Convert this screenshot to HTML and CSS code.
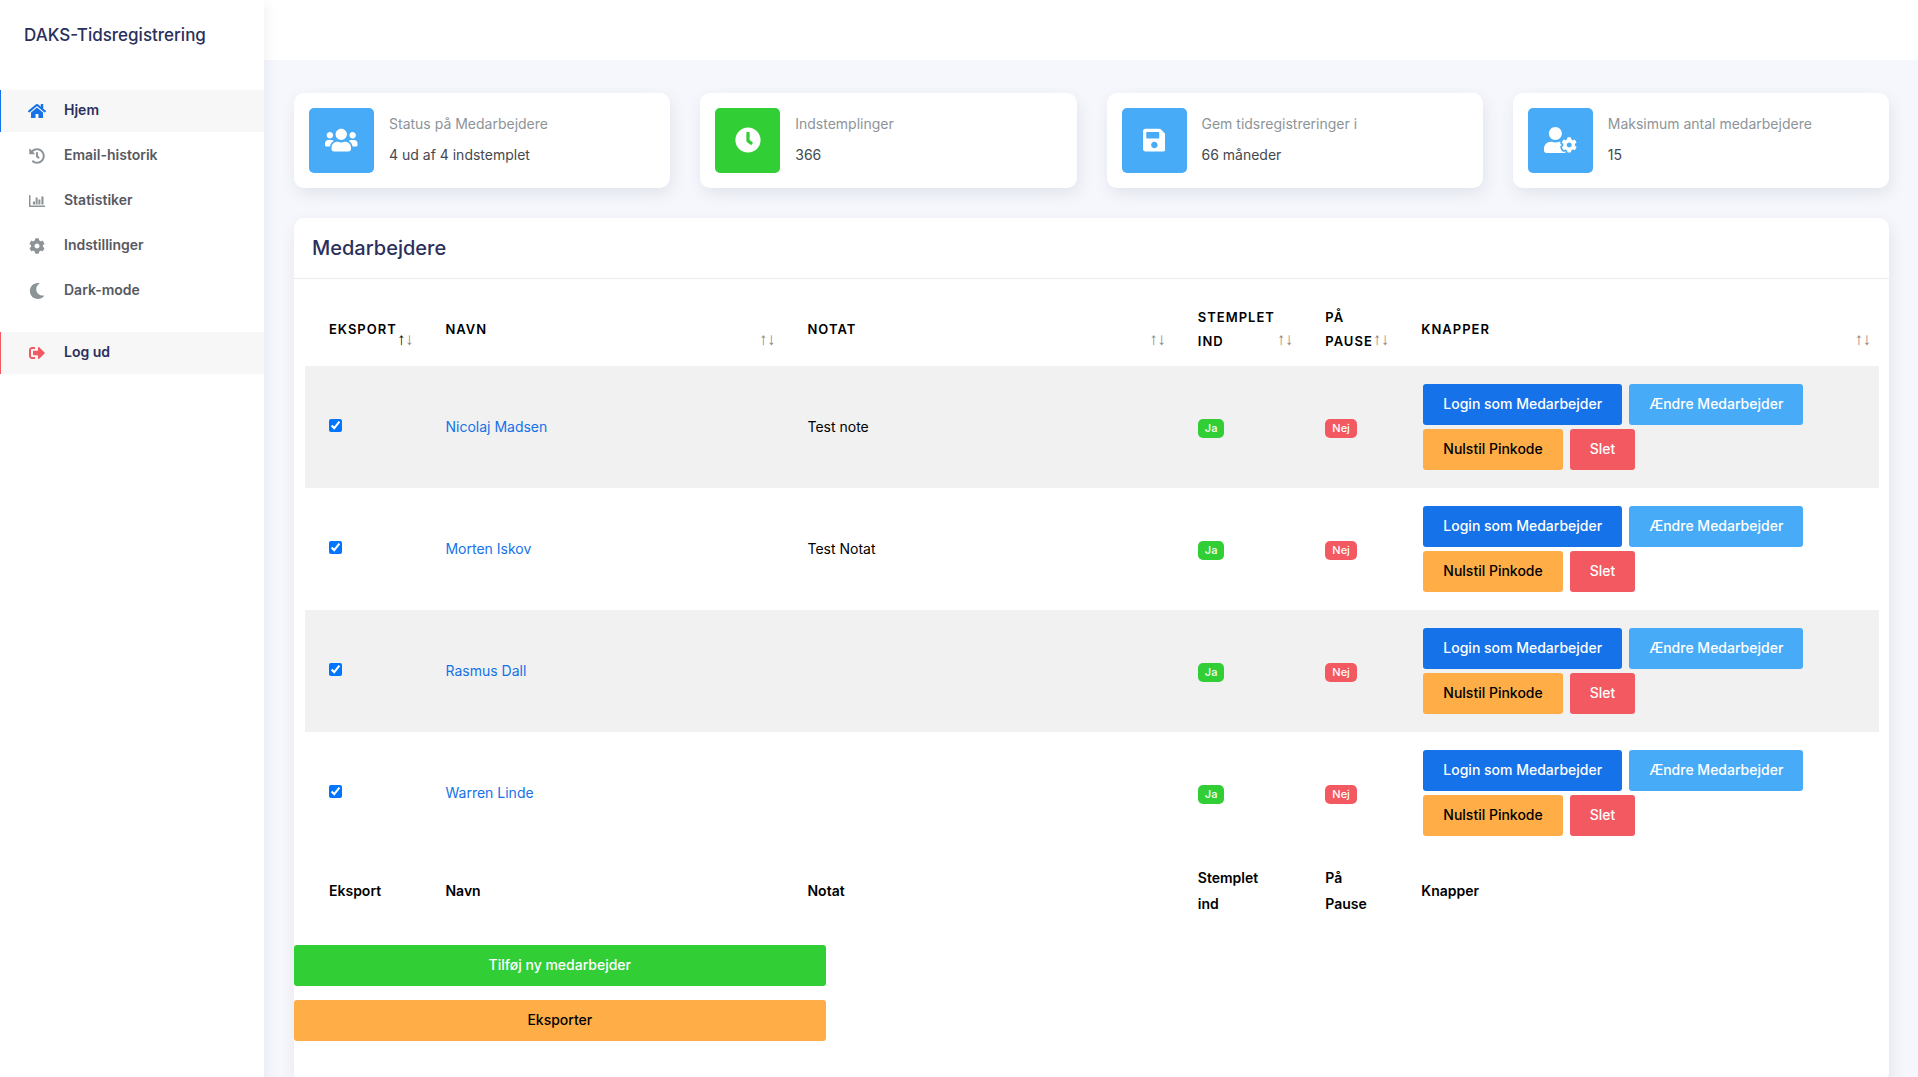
FILE: index.html
```
<!DOCTYPE html>
<html lang="da">
<head>
  <meta charset="UTF-8" />
  <title>DAKS-Tidsregistrering</title>
  <meta name="viewport" content="width=device-width, initial-scale=1.0" />
  <link rel="stylesheet" href="styles.css">
</head>
<body>

  <div class="wrapper">
    <!-- SIDEBAR -->
    <aside class="sidebar">
      <a href="#" class="logo">DAKS-Tidsregistrering</a>
      <nav>
        <ul class="nav">
          <li class="active">
            <a href="#">
              <svg viewBox="0 0 576 512"><path d="M280.37 148.26L96 300.11V464a16 16 0 0 0 16 16l112.06-.29a16 16 0 0 0 15.92-16V368a16 16 0 0 1 16-16h64a16 16 0 0 1 16 16v95.64a16 16 0 0 0 16 16.05L464 480a16 16 0 0 0 16-16V300L295.67 148.26a12.19 12.19 0 0 0-15.3 0zM571.6 251.47L488 182.56V44.05a12 12 0 0 0-12-12h-56a12 12 0 0 0-12 12v72.61L318.47 43a48 48 0 0 0-61 0L4.34 251.47a12 12 0 0 0-1.6 16.9l25.5 31A12 12 0 0 0 45.15 301l235.22-193.74a12.19 12.19 0 0 1 15.3 0L530.9 301a12 12 0 0 0 16.9-1.6l25.5-31a12 12 0 0 0-1.7-16.93z"/></svg>
              <span>Hjem</span>
            </a>
          </li>
          <li>
            <a href="#">
              <svg viewBox="0 0 512 512"><path d="M504 255.531c.253 136.64-111.18 248.372-247.82 248.468-59.015.042-113.223-20.53-155.822-54.911-11.077-8.94-11.905-25.541-1.839-35.607l11.267-11.267c8.609-8.609 22.353-9.551 31.891-1.984C173.062 425.135 212.781 440 256 440c101.705 0 184-82.311 184-184 0-101.705-82.311-184-184-184-48.814 0-93.149 18.969-126.068 49.932l50.754 50.754c10.08 10.08 2.941 27.314-11.313 27.314H24c-8.837 0-16-7.163-16-16V38.627c0-14.254 17.234-21.393 27.314-11.314l49.372 49.372C129.209 34.136 189.552 8 256 8c136.81 0 247.747 110.78 248 247.531zm-180.912 78.784l9.823-12.63c8.138-10.463 6.253-25.542-4.21-33.679L288 256.349V152c0-13.255-10.745-24-24-24h-16c-13.255 0-24 10.745-24 24v135.651l65.409 50.874c10.463 8.137 25.541 6.253 33.679-4.21z"/></svg>
              <span>Email-historik</span>
            </a>
          </li>
          <li>
            <a href="#">
              <svg viewBox="0 0 512 512"><path d="M0 76a12 12 0 0 1 12-12h24a12 12 0 0 1 12 12v324h452a12 12 0 0 1 12 12v24a12 12 0 0 1-12 12H12a12 12 0 0 1-12-12zM124 268h68v100h-68zM212 140h64v228h-64zM300 204h64v164h-64zM396 108h68v260h-68z"/></svg>
              <span>Statistiker</span>
            </a>
          </li>
          <li>
            <a href="#">
              <svg viewBox="0 0 512 512"><path d="M487.4 315.7l-42.6-24.6c4.3-23.2 4.3-47 0-70.2l42.6-24.6c4.9-2.8 7.1-8.6 5.5-14-11.1-35.6-30-67.8-54.7-94.6-3.8-4.1-10-5.1-14.8-2.3L380.8 110c-17.9-15.4-38.5-27.3-60.8-35.1V25.8c0-5.6-3.9-10.5-9.4-11.7-36.7-8.2-74.3-7.8-109.2 0-5.5 1.2-9.4 6.1-9.4 11.7V75c-22.2 7.9-42.8 19.8-60.8 35.1L88.7 85.5c-4.9-2.8-11-1.9-14.8 2.3-24.7 26.7-43.6 58.9-54.7 94.6-1.7 5.4.6 11.2 5.5 14L67.3 221c-4.3 23.2-4.3 47 0 70.2l-42.6 24.6c-4.9 2.8-7.1 8.6-5.5 14 11.1 35.6 30 67.8 54.7 94.6 3.8 4.1 10 5.1 14.8 2.3l42.6-24.6c17.9 15.4 38.5 27.3 60.8 35.1v49.2c0 5.6 3.9 10.5 9.4 11.7 36.7 8.2 74.3 7.8 109.2 0 5.5-1.2 9.4-6.1 9.4-11.7v-49.2c22.2-7.9 42.8-19.8 60.8-35.1l42.6 24.6c4.9 2.8 11 1.9 14.8-2.3 24.7-26.7 43.6-58.9 54.7-94.6 1.5-5.5-.7-11.3-5.6-14.1zM256 336c-44.1 0-80-35.9-80-80s35.9-80 80-80 80 35.9 80 80-35.9 80-80 80z"/></svg>
              <span>Indstillinger</span>
            </a>
          </li>
          <li>
            <a href="#">
              <svg viewBox="0 0 512 512"><path d="M283.211 512c78.962 0 151.079-35.925 198.857-94.792 7.068-8.708-.639-21.43-11.562-19.35-124.203 23.654-238.262-71.576-238.262-196.954 0-72.222 38.662-138.635 101.498-174.394 9.686-5.512 7.25-20.197-3.756-22.23A258.156 258.156 0 0 0 283.211 0c-141.309 0-256 114.511-256 256 0 141.309 114.511 256 256 256z"/></svg>
              <span>Dark-mode</span>
            </a>
          </li>
          <li class="logout">
            <a href="#">
              <svg viewBox="0 0 512 512"><path d="M497 273L329 441c-15 15-41 4.500-41-17v-96H152c-13.300 0-24-10.700-24-24v-96c0-13.300 10.700-24 24-24h136V88c0-21.400 25.900-32 41-17l168 168c9.300 9.400 9.300 24.600 0 34zM192 436v-40c0-6.600-5.400-12-12-12H96c-17.700 0-32-14.300-32-32V160c0-17.700 14.300-32 32-32h84c6.600 0 12-5.400 12-12V76c0-6.600-5.400-12-12-12H96c-53 0-96 43-96 96v192c0 53 43 96 96 96h84c6.600 0 12-5.400 12-12z"/></svg>
              <span>Log ud</span>
            </a>
          </li>
        </ul>
      </nav>
    </aside>

    <div class="main-panel">
      <header class="topbar"></header>

      <main class="content">
        <!-- STATS -->
        <div class="stats">
          <div class="card stat">
            <div class="stat-icon info">
              <svg viewBox="0 0 640 512"><path d="M96 224c35.300 0 64-28.700 64-64s-28.700-64-64-64-64 28.700-64 64 28.700 64 64 64zm448 0c35.300 0 64-28.700 64-64s-28.700-64-64-64-64 28.700-64 64 28.700 64 64 64zm32 32h-64c-17.600 0-33.500 7.100-45.100 18.600 40.300 22.100 68.900 62 75.100 109.400h66c17.700 0 32-14.300 32-32v-32c0-35.300-28.700-64-64-64zm-256 0c61.900 0 112-50.100 112-112S381.900 32 320 32 208 82.100 208 144s50.100 112 112 112zm76.800 32h-8.300c-20.800 10-43.900 16-68.500 16s-47.600-6-68.500-16h-8.300C179.600 288 128 339.600 128 403.200V432c0 26.500 21.500 48 48 48h288c26.500 0 48-21.500 48-48v-28.800c0-63.600-51.600-115.200-115.200-115.200zm-223.700-13.400C161.500 263.100 145.600 256 128 256H64c-35.300 0-64 28.700-64 64v32c0 17.700 14.300 32 32 32h65.900c6.300-47.400 34.900-87.300 75.200-109.400z"/></svg>
            </div>
            <div class="stat-text">
              <p class="category">Status på Medarbejdere</p>
              <p class="value">4 ud af 4 indstemplet</p>
            </div>
          </div>
          <div class="card stat">
            <div class="stat-icon success">
              <svg viewBox="0 0 512 512"><path d="M256,8C119,8,8,119,8,256S119,504,256,504,504,393,504,256,393,8,256,8Zm92.490,313h0l-20,25a16,16,0,0,1-22.490,2.500h0l-67-49.720a40,40,0,0,1-15-31.230V112a16,16,0,0,1,16-16h32a16,16,0,0,1,16,16V256l58,42.500A16,16,0,0,1,348.490,321Z"/></svg>
            </div>
            <div class="stat-text">
              <p class="category">Indstemplinger</p>
              <p class="value">366</p>
            </div>
          </div>
          <div class="card stat">
            <div class="stat-icon info">
              <svg viewBox="0 0 448 512"><path d="M433.941 129.941l-83.882-83.882A48 48 0 0 0 316.118 32H48C21.490 32 0 53.490 0 80v352c0 26.510 21.490 48 48 48h352c26.510 0 48-21.490 48-48V163.882a48 48 0 0 0-14.059-33.941zM224 416c-35.346 0-64-28.654-64-64 0-35.346 28.654-64 64-64s64 28.654 64 64c0 35.346-28.654 64-64 64zm96-304.520V212c0 6.627-5.373 12-12 12H76c-6.627 0-12-5.373-12-12V108c0-6.627 5.373-12 12-12h228.520c3.183 0 6.235 1.264 8.485 3.515l3.480 3.480A11.996 11.996 0 0 1 320 111.480z"/></svg>
            </div>
            <div class="stat-text">
              <p class="category">Gem tidsregistreringer i</p>
              <p class="value">66 måneder</p>
            </div>
          </div>
          <div class="card stat">
            <div class="stat-icon info">
              <svg viewBox="0 0 640 512"><path d="M610.500 373.300c2.600-14.100 2.600-28.500 0-42.600l25.800-14.900c3-1.700 4.300-5.200 3.300-8.500-6.700-21.600-18.200-41.200-33.200-57.400-2.300-2.500-6-3.100-9-1.400l-25.800 14.900c-10.900-9.300-23.400-16.500-36.900-21.300v-29.800c0-3.400-2.400-6.400-5.700-7.100-22.300-5-45-4.800-66.200 0-3.300.7-5.700 3.700-5.700 7.100v29.800c-13.500 4.800-26 12-36.900 21.300l-25.800-14.900c-2.900-1.700-6.700-1.100-9 1.400-15 16.200-26.500 35.800-33.200 57.400-1 3.300.4 6.800 3.300 8.500l25.800 14.900c-2.600 14.100-2.600 28.500 0 42.600l-25.800 14.900c-3 1.700-4.300 5.200-3.300 8.500 6.700 21.600 18.200 41.100 33.200 57.400 2.300 2.500 6 3.100 9 1.400l25.800-14.900c10.900 9.300 23.400 16.500 36.900 21.300v29.800c0 3.400 2.400 6.400 5.700 7.100 22.300 5 45 4.800 66.200 0 3.300-.7 5.700-3.700 5.700-7.100v-29.800c13.500-4.800 26-12 36.900-21.300l25.800 14.900c2.900 1.700 6.700 1.100 9-1.400 15-16.200 26.500-35.800 33.200-57.400 1-3.300-.4-6.800-3.300-8.500l-25.800-14.900zM496 400.500c-26.800 0-48.500-21.800-48.500-48.500s21.800-48.500 48.500-48.500 48.500 21.800 48.500 48.500-21.700 48.500-48.500 48.500zM224 256c70.700 0 128-57.300 128-128S294.700 0 224 0 96 57.300 96 128s57.300 128 128 128zm201.200 226.500c-2.300-1.200-4.600-2.600-6.800-3.900l-7.900 4.600c-6 3.400-12.800 5.300-19.600 5.300-10.900 0-21.400-4.600-28.900-12.600-18.300-19.800-32.300-43.900-40.200-69.600-5.500-17.700 1.900-36.400 17.900-45.700l7.900-4.600c-.1-2.600-.1-5.200 0-7.800l-7.900-4.600c-16-9.200-23.400-28-17.900-45.700.9-2.900 2.200-5.800 3.200-8.700-3.800-.3-7.500-1.200-11.400-1.200h-16.700c-22.200 10.200-46.900 16-72.900 16s-50.600-5.800-72.900-16h-16.700C60.200 288 0 348.200 0 422.400V464c0 26.500 21.500 48 48 48h352c10.100 0 19.500-3.200 27.200-8.500-1.200-3.800-2-7.700-2-11.800v-9.200z"/></svg>
            </div>
            <div class="stat-text">
              <p class="category">Maksimum antal medarbejdere</p>
              <p class="value">15</p>
            </div>
          </div>
        </div>

        <!-- EMPLOYEES -->
        <section class="card">
          <h1 class="card-title">Medarbejdere</h1>

          <div class="table-wrap">
            <table>
              <colgroup>
                <col class="col-export">
                <col class="col-name">
                <col class="col-note">
                <col class="col-in">
                <col class="col-pause">
                <col>
              </colgroup>
              <thead>
                <tr>
                  <th class="asc">Eksport</th>
                  <th>Navn</th>
                  <th>Notat</th>
                  <th>Stemplet ind</th>
                  <th>På pause</th>
                  <th>Knapper</th>
                </tr>
              </thead>
              <tbody>
                <tr>
                  <td><input type="checkbox" aria-label="Eksporter Nicolaj Madsen" checked></td>
                  <td><a href="#">Nicolaj Madsen</a></td>
                  <td>Test note</td>
                  <td><span class="badge success">Ja</span></td>
                  <td><span class="badge danger">Nej</span></td>
                  <td>
                    <div class="buttons">
                      <button class="btn primary">Login som Medarbejder</button>
                      <button class="btn info">Ændre Medarbejder</button>
                      <button class="btn warning">Nulstil Pinkode</button>
                      <button class="btn danger">Slet</button>
                    </div>
                  </td>
                </tr>
                <tr>
                  <td><input type="checkbox" aria-label="Eksporter Morten Iskov" checked></td>
                  <td><a href="#">Morten Iskov</a></td>
                  <td>Test Notat</td>
                  <td><span class="badge success">Ja</span></td>
                  <td><span class="badge danger">Nej</span></td>
                  <td>
                    <div class="buttons">
                      <button class="btn primary">Login som Medarbejder</button>
                      <button class="btn info">Ændre Medarbejder</button>
                      <button class="btn warning">Nulstil Pinkode</button>
                      <button class="btn danger">Slet</button>
                    </div>
                  </td>
                </tr>
                <tr>
                  <td><input type="checkbox" aria-label="Eksporter Rasmus Dall" checked></td>
                  <td><a href="#">Rasmus Dall</a></td>
                  <td></td>
                  <td><span class="badge success">Ja</span></td>
                  <td><span class="badge danger">Nej</span></td>
                  <td>
                    <div class="buttons">
                      <button class="btn primary">Login som Medarbejder</button>
                      <button class="btn info">Ændre Medarbejder</button>
                      <button class="btn warning">Nulstil Pinkode</button>
                      <button class="btn danger">Slet</button>
                    </div>
                  </td>
                </tr>
                <tr>
                  <td><input type="checkbox" aria-label="Eksporter Warren Linde" checked></td>
                  <td><a href="#">Warren Linde</a></td>
                  <td></td>
                  <td><span class="badge success">Ja</span></td>
                  <td><span class="badge danger">Nej</span></td>
                  <td>
                    <div class="buttons">
                      <button class="btn primary">Login som Medarbejder</button>
                      <button class="btn info">Ændre Medarbejder</button>
                      <button class="btn warning">Nulstil Pinkode</button>
                      <button class="btn danger">Slet</button>
                    </div>
                  </td>
                </tr>
              </tbody>
              <tfoot>
                <tr>
                  <th>Eksport</th>
                  <th>Navn</th>
                  <th>Notat</th>
                  <th>Stemplet ind</th>
                  <th>På Pause</th>
                  <th>Knapper</th>
                </tr>
              </tfoot>
            </table>
          </div>

          <div class="actions">
            <button class="btn success">Tilføj ny medarbejder</button>
            <button class="btn warning">Eksporter</button>
          </div>
        </section>
      </main>
    </div>
  </div>

</body>
</html>
```

FILE: styles.css
```
* {
  box-sizing: border-box;
}

body {
  margin: 0;
  font-family: Inter, "Open Sans", sans-serif;
  font-size: 14px;
  line-height: 24px;
  color: #000;
  background: #f5f7fd;
}

p, h1, ul {
  margin: 0;
  padding: 0;
}

a {
  color: #1572e8;
  text-decoration: none;
}

.wrapper {
  display: flex;
  min-height: 100vh;
}

/* Sidebar */
.sidebar {
  position: relative;
  z-index: 1;
  flex: 0 0 264px;
  background: #fff;
  box-shadow: 4px 4px 10px rgba(69, 65, 78, 0.06);
}

.logo {
  display: block;
  padding: 0 24px;
  font-size: 17px;
  font-weight: 500;
  line-height: 70px;
  color: #2a2f5b;
}

.nav {
  padding-top: 20px;
  list-style: none;
}

.nav li {
  margin-bottom: 3px;
}

.nav a {
  display: flex;
  align-items: center;
  gap: 17px;
  height: 42px;
  padding: 0 27px;
  font-weight: 600;
  color: #575962;
}

.nav span {
  padding-bottom: 2px;
}

.nav svg {
  width: 20px;
  height: 16px;
  fill: #8d9498;
}

.nav .active a,
.nav .logout a {
  padding-left: 26px;
  border-left: 1px solid #1572e8;
  color: #2a2f5b;
  background: #f7f7f7;
}

.nav .active svg {
  fill: #1572e8;
}

.nav .logout {
  margin-top: 20px;
}

.nav .logout a {
  border-color: #f25961;
}

.nav .logout svg {
  fill: #f25961;
}

/* Main panel */
.main-panel {
  flex: 1;
  min-width: 0;
}

.topbar {
  height: 60px;
  background: #fff;
}

.content {
  padding: 33px 29px 30px 30px;
}

.card {
  border-radius: 10px;
  background: #fff;
  box-shadow: 2px 6px 15px rgba(69, 65, 78, 0.1);
}

.stats {
  display: grid;
  grid-template-columns: repeat(4, 1fr);
  gap: 30px;
  margin-bottom: 30px;
}

.stat {
  display: flex;
  align-items: center;
  gap: 15px;
  padding: 15px;
}

.stat-icon {
  display: flex;
  align-items: center;
  justify-content: center;
  width: 65px;
  height: 65px;
  padding-bottom: 2px;
  border-radius: 5px;
}

.stat-icon svg {
  height: 26px;
  fill: #fff;
}

.stat-text {
  display: grid;
  gap: 7px;
  padding-bottom: 2px;
}

.category {
  color: #8d9498;
}

.value {
  color: #444950;
}

.card-title {
  padding: 0 18px;
  border-bottom: 1px solid #ebecec;
  font-size: 20px;
  font-weight: 500;
  line-height: 60px;
  color: #2a2f5b;
}

/* Table */
.table-wrap {
  padding: 14px 10px 0 11px;
}

table {
  width: 100%;
  table-layout: fixed;
  border-collapse: collapse;
}

.col-export { width: 7.4%; }
.col-name { width: 23%; }
.col-note { width: 24.8%; }
.col-in { width: 8.1%; }
.col-pause { width: 6.1%; }

th, td {
  padding: 0 24px;
  text-align: left;
}

thead th {
  position: relative;
  height: 73px;
  padding-bottom: 2px;
  font-size: 13px;
  font-weight: 600;
  letter-spacing: 1px;
  text-transform: uppercase;
}

/* sort arrows */
thead th::before,
thead th::after {
  position: absolute;
  right: 16px;
  bottom: 14px;
  font-family: "Liberation Serif", "Times New Roman", serif;
  font-size: 17px;
  font-weight: 400;
  letter-spacing: 0;
  opacity: 0.5;
  content: "↑";
}

thead th::after {
  right: 8px;
  content: "↓";
}

thead .asc::before {
  opacity: 1;
}

tbody tr {
  height: 122px;
}

tbody tr:nth-child(odd) {
  background: #f1f1f1;
}

tfoot th {
  height: 74px;
  font-weight: 600;
  line-height: 26px;
}

input[type="checkbox"] {
  width: 13px;
  height: 13px;
  margin: 0;
}

.badge {
  display: inline-block;
  padding: 0 7px;
  border-radius: 5px;
  font-size: 11px;
  font-weight: 500;
  line-height: 19px;
  vertical-align: middle;
}

.buttons {
  display: flex;
  flex-wrap: wrap;
  gap: 4px 7px;
  max-width: 400px;
  padding-left: 2px;
}

.btn {
  height: 41px;
  padding: 0 20px 2px;
  border: none;
  border-radius: 3px;
  font-family: inherit;
  font-size: 14px;
  font-weight: 500;
  white-space: nowrap;
  cursor: pointer;
}

.btn:hover {
  opacity: 0.9;
}

.primary, .info, .success, .danger {
  color: #fff;
}

.primary { background: #1572e8; }
.info { background: #48abf7; }
.success { background: #31ce36; }
.danger { background: #f25961; }

.warning {
  color: #000;
  background: #ffad46;
}

.actions {
  display: grid;
  gap: 14px;
  width: 33.33%;
  padding: 17px 0 42px;
}
```
